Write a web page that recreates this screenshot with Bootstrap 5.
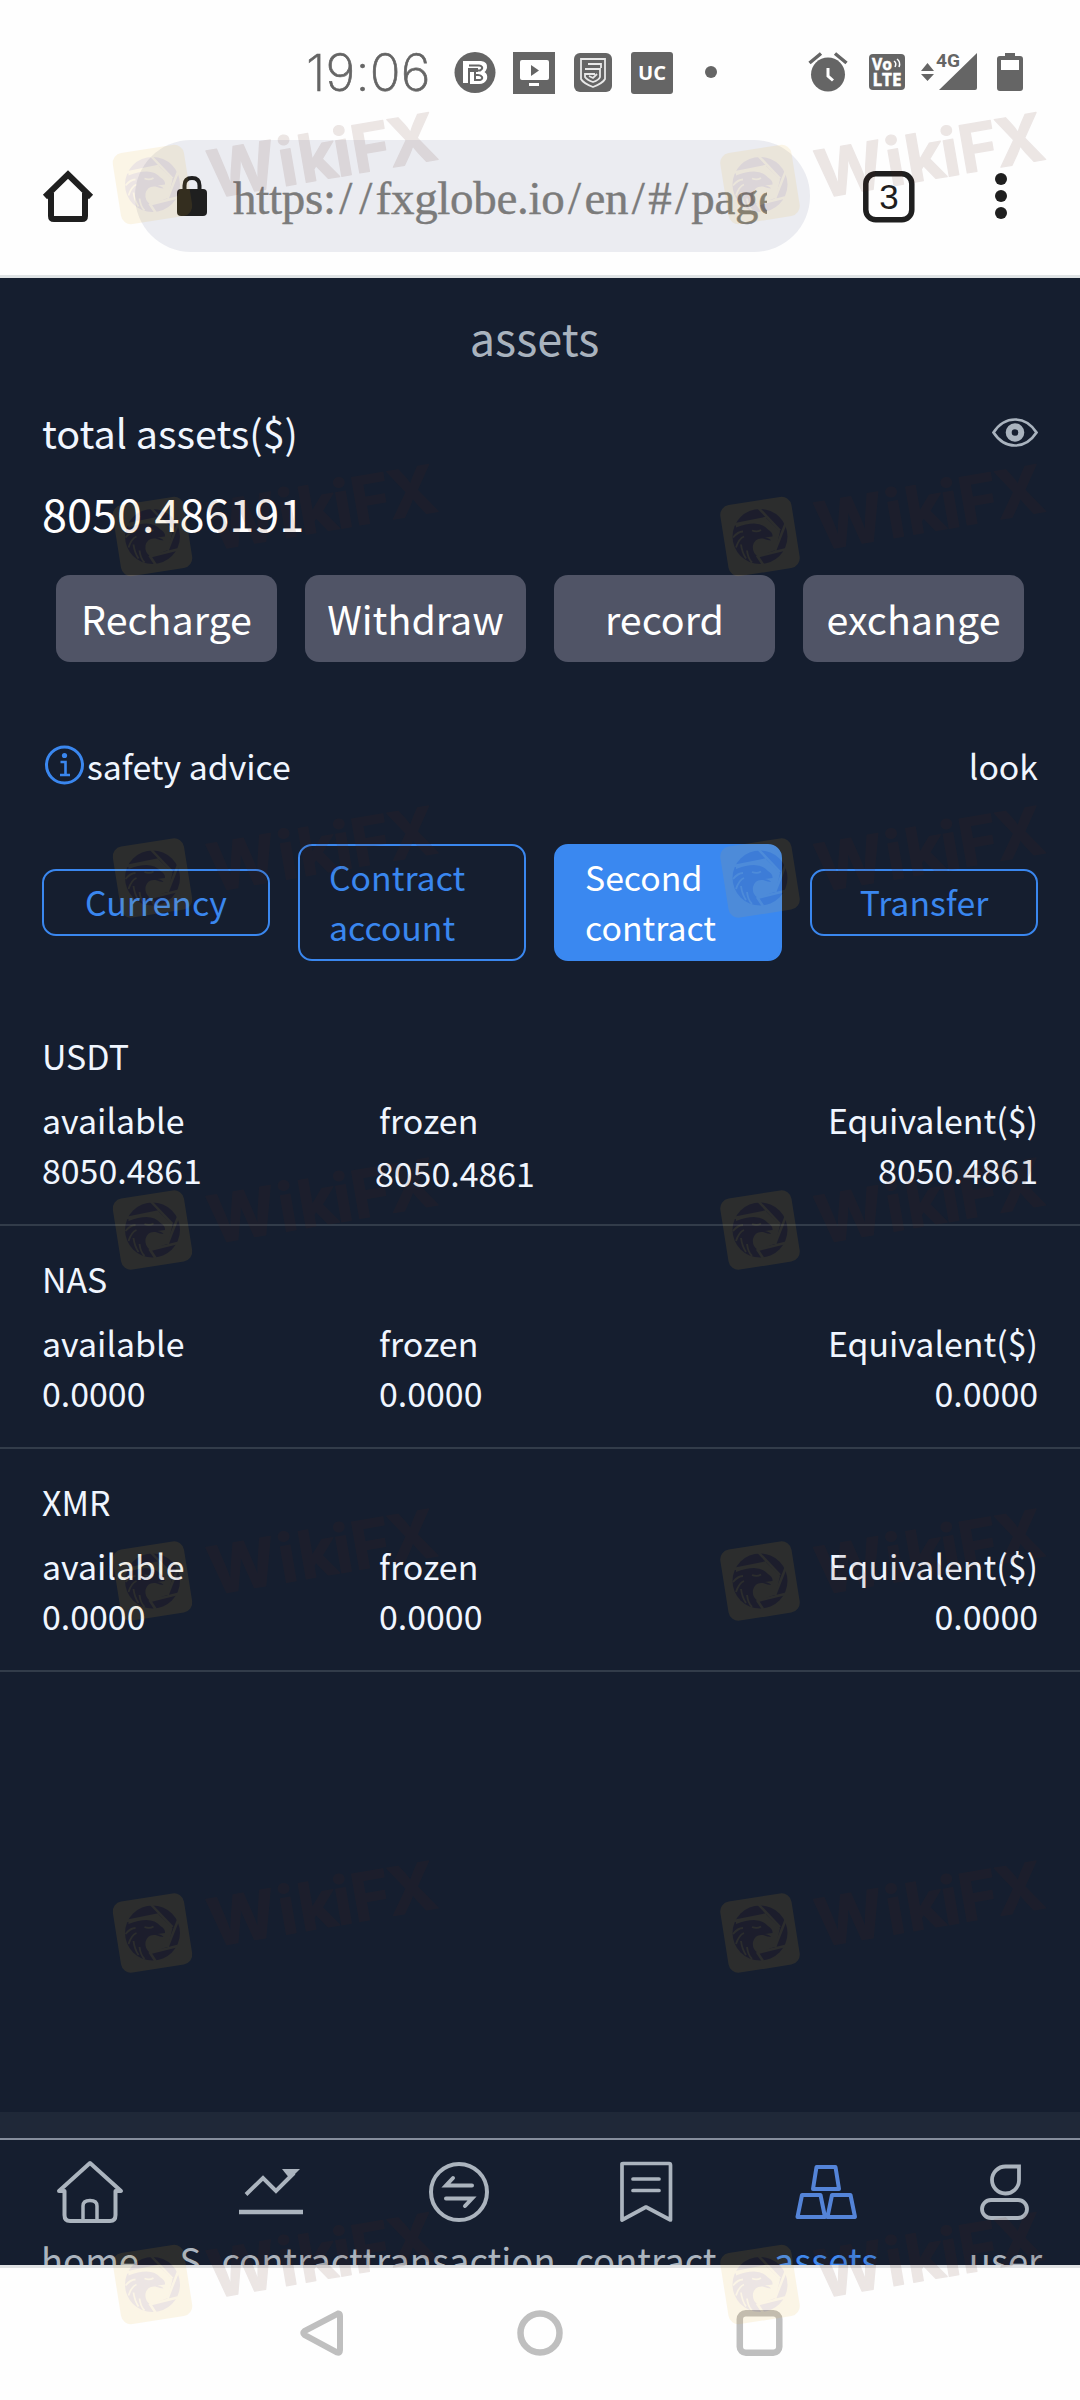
<!DOCTYPE html>
<html lang="en">
<head>
<meta charset="utf-8">
<meta name="viewport" content="width=device-width, initial-scale=1">
<title>assets</title>
<link href="https://cdn.jsdelivr.net/npm/bootstrap@5.3.0/dist/css/bootstrap.min.css" rel="stylesheet">
<style>
  html, body { width: 1080px; height: 2400px; margin: 0; overflow: hidden; }
  body { background: #fefefe; font-family: "Noto Sans CJK SC", "Noto Sans", sans-serif; color: #f0f6ff; }
  svg { display: block; flex: none; overflow: visible; }
  .phone { width: 1080px; height: 2400px; }
  .statusbar { height: 140px; padding: 52px 57px 0 306px; color: #656565; }
  .clock { width: 148px; font: 200 51px/42px "Inter", "Liberation Sans", sans-serif; letter-spacing: .2px; -webkit-text-stroke: .7px #656565; white-space: nowrap; }
  .status-icons { gap: 17px; }
  .alarm-gap { margin-right: 21px; }
  .signal-gap { margin-left: 16px; }
  .battery-gap { margin-left: 16px; }
  .toolbar { height: 138px; padding: 0 42px; color: #1f1f1f; border-bottom: 3px solid #dfe3e5; }
  .toolbar > svg { margin-top: 31px; }
  .tab-count { margin-left: 53px; }
  .more-dots { margin-left: 80px; }
  .urlpill { width: 675px; height: 112px; border-radius: 58px; background: #ebecf1; margin-left: 41px; padding: 0 43px 0 42px; }
  .urltext { font: 47px/60px "Liberation Serif", serif; color: #7b7b7b; margin: 6px 0 0 26px; letter-spacing: -.3px; white-space: nowrap; overflow: hidden; height: 62px; -webkit-text-stroke: .4px #7b7b7b; }
  .urltext i { font-style: normal; margin: 0 3.6px; }
  .app { height: 1987px; background: #151e2f; }
  .title-line { font-size: 45px; line-height: 118px; height: 117px; color: #a9b3be; padding-right: 11px; }
  .side { padding-left: 42px; padding-right: 42px; }
  .total-label { font-size: 39.5px; line-height: 74px; }
  .total-value { font-size: 45px; line-height: 88px; height: 90px; color: #fff; }
  .actions { padding: 16px 56px 0; gap: 28px; }
  .actions .btn { flex: 1 1 0; height: 87px; border: 0; border-radius: 14px; background: #505466; color: #fff; font-size: 39.4px; line-height: 85px; padding: 0 0 2px; }
  .safety { margin-top: 79px; height: 49px; font-size: 33.8px; line-height: 50px; }
  .safety svg { margin-top: -2px; }
  .tabs { margin-top: 54px; height: 117px; gap: 28px; }
  .tabs .btn { flex: none; width: 228px; border: 2px solid #3a87ef; border-radius: 14px; color: #3a87ef; background: transparent; font-size: 33.8px; line-height: 50px; padding: 6px 0 7px; }
  .tabs .btn.two-line { text-align: left; padding-left: 29px; }
  .tabs .btn.active { background: #3a88f0; border-color: #3a88f0; color: #fff; }
  .coins { margin-top: 42px; font-size: 33.9px; line-height: 50px; }
  .coin { height: 223px; padding-top: 28px; border-bottom: 2px solid #323c4a; }
  .coin-figures { margin-top: 14px; }
  .coin-mid { width: 332px; padding-left: 5px; }
  .coin-first { width: 332px; }
  .shifted { margin: 3px 0 0 -4px; }
  .band { height: 28px; background: #1f2838; border-bottom: 2px solid #858d9c; }
  .tabbar { height: 125px; overflow: hidden; color: #abb4be; font-size: 36.4px; line-height: 54px; white-space: nowrap; }
  .tabbar .entry { padding-top: 17px; }
  .entry svg { width: 70px; height: 70px; margin-bottom: 5px; }
  .w180 { width: 180px; } .w183 { width: 182px; } .w193 { width: 194px; } .w164 { width: 163px; }
  .current { color: #3f88ee; }
  .sysnav { height: 135px; border-top: 3px solid #dfe1e3; }
  .sysnav div { gap: 174px; padding: 42px 0 0 300px; }
  .watermarks { position: absolute; left: 0; top: 0; pointer-events: none; }
</style>
</head>
<body>
<div class="phone d-flex flex-column">

  <header class="statusbar d-flex align-items-start">
    <div class="clock">19:06</div>
    <div class="status-icons d-flex">
      <svg width="42" height="42" viewBox="0 0 42 42"><circle cx="21" cy="20.500" r="20.500" fill="#656565"/><path d="M9 9H27Q34 10 33 16Q32 19 30.500 20Q34 22 33 27Q31 32 25 32H16V20H24V16H14V31H9Z" fill="#fff"/><path d="M21 19.500V28H26Q29 27 28 25Q27 23 24 23H21M21 18.500H26Q29 17 28 15Q27 13.500 25 13.500H15" fill="none" stroke="#656565" stroke-width="2"/></svg>
      <svg width="42" height="42" viewBox="0 0 42 42"><path d="M0 0H42V42H0Z" fill="#656565"/><rect x="7" y="8" width="29" height="20" rx="2" fill="#fff"/><path d="M18 13L26 18.500L18 24Z" fill="#656565"/><path d="M16 31H26V34H16Z" fill="#fff"/></svg>
      <svg width="42" height="42" viewBox="0 0 42 42"><rect x="2" y="1" width="38" height="39" rx="6" fill="#656565"/><g fill="none" stroke="#e8e8e8" stroke-width="1.800"><path d="M9 7H33V27Q31 31 21 35Q11 31 9 27Z"/><path d="M16 12H29V16M13 17H28V25Q27 28 21 30Q15 28 13 25V22H23"/><path d="M17 24L21 26L25 22"/></g></svg>
      <svg width="42" height="42" viewBox="0 0 42 42"><rect width="42" height="42" rx="3" fill="#656565"/><text x="21" y="27.500" text-anchor="middle" font-family="Open Sans, sans-serif" font-weight="700" font-size="19" textLength="28" lengthAdjust="spacingAndGlyphs" fill="#fff">UC</text></svg>
      <svg width="46" height="42" viewBox="0 0 46 42"><circle cx="21" cy="20" r="6" fill="#656565"/></svg>
    </div>
    <div class="d-flex ms-auto">
      <svg class="alarm-gap" width="40" height="42" viewBox="0 0 40 42"><circle cx="20" cy="22.500" r="17" fill="#656565"/><path d="M1.500 11L13 1.500M38.500 11L27 1.500" stroke="#656565" stroke-width="3.500"/><path d="M20 16V24L25 28.500" fill="none" stroke="#fff" stroke-width="3"/></svg>
      <svg width="36" height="42" viewBox="0 0 36 42"><rect y="2" width="36" height="36" rx="4" fill="#656565"/><g font-family="Open Sans, sans-serif" font-weight="700" fill="#fff" stroke="#fff" stroke-width=".5"><text x="3" y="18" font-size="16.500" textLength="20" lengthAdjust="spacingAndGlyphs">Vo</text><text x="3.500" y="34" font-size="17" textLength="29" lengthAdjust="spacingAndGlyphs">LTE</text></g><path d="M25 9Q28 11 26 15M28 7Q32 10 30 15" fill="none" stroke="#fff" stroke-width="1.500"/></svg>
      <svg class="signal-gap" width="60" height="42" viewBox="0 0 60 42"><path d="M0 19L6.500 11L13 19ZM0 22H13L6.500 29ZM18 38L56 1V36Q56 38 54 38Z" fill="#656565"/><text x="15" y="15" font-family="Roboto, sans-serif" font-weight="700" font-size="18.500" textLength="24" lengthAdjust="spacingAndGlyphs" fill="#656565">4G</text></svg>
      <svg class="battery-gap" width="26" height="42" viewBox="0 0 26 42"><path d="M8 1H18V4H23Q26 4 26 7V36Q26 39 23 39H3Q0 39 0 36V7Q0 4 3 4H8Z" fill="#656565"/><path d="M4 8H22V18H4Z" fill="#fff"/></svg>
    </div>
  </header>

  <nav class="toolbar d-flex align-items-start">
    <svg width="52" height="52" viewBox="0 0 52 52"><path d="M3 26L26 3.500L49 26M9 22V45Q9 48 12 48H40Q43 48 43 45V22" fill="none" stroke="#1f1f1f" stroke-width="6"/></svg>
    <div class="urlpill d-flex align-items-center">
      <svg width="30" height="40" viewBox="0 0 30 40"><rect y="13" width="30" height="27" rx="4" fill="#1f1f1f"/><path d="M7.500 15V9.500Q7.500 2 15 2Q22.500 2 22.500 9.500V15" fill="none" stroke="#1f1f1f" stroke-width="4"/></svg>
      <div class="urltext flex-grow-1">https:<i>/</i><i>/</i>fxglobe.io<i>/</i>en<i>/</i>#<i>/</i>page</div>
    </div>
    <svg class="tab-count" width="52" height="52" viewBox="0 0 52 52"><rect x="2.800" y="2.800" width="46" height="46" rx="10" fill="none" stroke="#1f1f1f" stroke-width="5.500"/><text x="26" y="38" text-anchor="middle" font-family="Liberation Sans, sans-serif" font-size="35" fill="#1f1f1f">3</text></svg>
    <svg class="more-dots" width="14" height="52" viewBox="0 0 14 52"><g fill="#1f1f1f"><circle cx="6" cy="8" r="6"/><circle cx="6" cy="25" r="6"/><circle cx="6" cy="42" r="6"/></g></svg>
  </nav>

  <main class="app d-flex flex-column">
    <div class="title-line text-center">assets</div>
    <section class="side">
      <div class="d-flex justify-content-between align-items-center total-label">
        <span>total assets($)</span>
        <svg width="46" height="29" viewBox="0 0 46 29"><path d="M1.500 14.500Q10 1.500 23 1.500Q36 1.500 44.500 14.500Q36 27.500 23 27.500Q10 27.500 1.500 14.500Z" fill="none" stroke="#a9b3be" stroke-width="2.700"/><circle cx="23" cy="14.500" r="6.300" fill="none" stroke="#a9b3be" stroke-width="6"/></svg>
      </div>
      <div class="total-value">8050.486191</div>
    </section>
    <div class="actions d-flex">
      <button class="btn" type="button">Recharge</button>
      <button class="btn" type="button">Withdraw</button>
      <button class="btn" type="button">record</button>
      <button class="btn" type="button">exchange</button>
    </div>
    <div class="safety side d-flex justify-content-between">
      <div class="d-flex align-items-center">
        <svg width="45" height="40" viewBox="0 0 45 40"><circle cx="22.500" cy="20" r="18" fill="none" stroke="#3a87ef" stroke-width="3"/><circle cx="22.500" cy="10.500" r="2.600" fill="#3a87ef"/><path d="M18.500 17H23.500V30M18 30H28" fill="none" stroke="#3a87ef" stroke-width="2.600"/></svg>
        <span>safety advice</span>
      </div>
      <span>look</span>
    </div>
    <div class="tabs side d-flex align-items-center">
      <button class="btn" type="button">Currency</button>
      <button class="btn two-line" type="button">Contract<br>account</button>
      <button class="btn two-line active" type="button">Second<br>contract</button>
      <button class="btn" type="button">Transfer</button>
    </div>
    <section class="coins flex-grow-1">
      <article class="coin side">
        <div>USDT</div>
        <div class="coin-figures d-flex">
          <div class="coin-first"><div>available</div><div>8050.4861</div></div>
          <div class="coin-mid"><div>frozen</div><div class="shifted">8050.4861</div></div>
          <div class="ms-auto text-end"><div>Equivalent($)</div><div>8050.4861</div></div>
        </div>
      </article>
      <article class="coin side">
        <div>NAS</div>
        <div class="coin-figures d-flex">
          <div class="coin-first"><div>available</div><div>0.0000</div></div>
          <div class="coin-mid"><div>frozen</div><div>0.0000</div></div>
          <div class="ms-auto text-end"><div>Equivalent($)</div><div>0.0000</div></div>
        </div>
      </article>
      <article class="coin side">
        <div>XMR</div>
        <div class="coin-figures d-flex">
          <div class="coin-first"><div>available</div><div>0.0000</div></div>
          <div class="coin-mid"><div>frozen</div><div>0.0000</div></div>
          <div class="ms-auto text-end"><div>Equivalent($)</div><div>0.0000</div></div>
        </div>
      </article>
    </section>
    <div class="band"></div>
    <nav class="tabbar d-flex">
      <div class="entry w180 d-flex flex-column align-items-center">
        <svg viewBox="0 0 70 70" fill="none" stroke="#abb4be" stroke-width="4" stroke-linejoin="round"><path d="M9.500 34H4L35 6L66 34H60.500V58Q60.500 64 55 64H15Q9.500 64 9.500 58Z"/><path d="M28 64V49Q28 43.500 35 43.500Q42 43.500 42 49V64" stroke-width="3.500"/></svg>
        <span>home</span>
      </div>
      <div class="entry w183 d-flex flex-column align-items-center">
        <svg viewBox="0 0 70 70"><path d="M10 37.500L27 21L40 34L58 16" fill="none" stroke="#abb4be" stroke-width="4"/><path d="M46 12H64L54 22Z" fill="#abb4be"/><path d="M3 55H67" stroke="#abb4be" stroke-width="4.500"/></svg>
        <span>S_contract</span>
      </div>
      <div class="entry w193 d-flex flex-column align-items-center">
        <svg viewBox="0 0 70 70" fill="none" stroke="#abb4be" stroke-width="4" stroke-linecap="round"><circle cx="35" cy="35" r="28"/><path d="M48 28.500H22L29 21M22 41.500H48L41 49"/></svg>
        <span>transaction</span>
      </div>
      <div class="entry w180 d-flex flex-column align-items-center">
        <svg viewBox="0 0 70 70" fill="none" stroke="#abb4be" stroke-width="3.700" stroke-linejoin="round" stroke-linecap="round"><path d="M11 7Q11 6.500 12 6.500H58Q59.500 6.500 59.500 8V63L35 50L11 63Z"/><path d="M22 22H48M22 33.500H48"/></svg>
        <span>contract</span>
      </div>
      <div class="entry w180 d-flex flex-column align-items-center">
        <svg viewBox="0 0 70 70" fill="none" stroke="#5484d8" stroke-width="4" stroke-linejoin="round"><path d="M25.500 10H44.500L48 32H22ZM11 38H29.500L34 60H6.500ZM41 38H59.500L64 60H36.500Z"/></svg>
        <span class="current">assets</span>
      </div>
      <div class="entry w164 d-flex flex-column align-items-center ps-3">
        <svg viewBox="0 0 70 70" fill="none" stroke="#abb4be" stroke-width="3.800"><path d="M48 9.500V23.500A13.500 13.500 0 1 1 34.500 9.500Z"/><rect x="11" y="43" width="45" height="18" rx="9"/></svg>
        <span>user</span>
      </div>
    </nav>
  </main>

  <footer class="sysnav">
    <div class="d-flex">
      <svg width="43" height="46" viewBox="0 0 43 46"><path d="M38 3.500Q40 3 40 6V40Q40 43.500 37 42.500L4.500 25Q2 23 4.500 21Z" fill="none" stroke="#bfbfbf" stroke-width="6"/></svg>
      <svg width="45" height="46" viewBox="0 0 45 46"><circle cx="23" cy="23" r="19.500" fill="none" stroke="#bfbfbf" stroke-width="6.500"/></svg>
      <svg width="46" height="46" viewBox="0 0 46 46"><rect x="3.800" y="3.300" width="39.500" height="39.500" rx="6" fill="none" stroke="#bfbfbf" stroke-width="6.500"/></svg>
    </div>
  </footer>
</div>

<svg class="watermarks" width="1080" height="2400" viewBox="0 0 1080 2400">
  <defs>
    <g id="stamp" opacity=".105">
      <rect x="-36" y="-36" width="72" height="72" rx="10" transform="rotate(-9)" fill="#e8ac24"/>
      <circle r="27.500" fill="#5a1c14"/>
      <g fill="none" stroke="#e8ac24" stroke-width="2.500">
        <path d="M-26 -12L6 -18.500M-2 -29L20 -6M26 -14L15 14M-3 20L25 13M-3 19L3 28"/>
      </g>
      <path d="M-24 -12.500L6 -18.500L20 -5L15.500 13.500L-2 20Q-8 16 -7 9Q-5 1 3 2Q8 4 11 4Q10 2 5 1L12.500 0Q13 -4 8 -7Q3 -13 -6 -13Q-14 -13 -24 -9Z" fill="#e8ac24"/>
      <path d="M-8 -6Q-3 -4 1 -6.500M-13 14Q-12 22 -8 26M-24 11Q-21 2 -16 0M-27 1Q-22 -5 -17 -5M-19 8Q-18 16 -14 22" fill="none" stroke="#e8ac24" stroke-width="1.800"/>
      <text transform="translate(60 14) rotate(-9.800)" x="0 71 91 127 145 182" y="0" font-family="Inter, Liberation Sans, sans-serif" font-weight="700" font-size="66" fill="#5a2418" stroke="#5a2418" stroke-width="1.200" stroke-linejoin="round">WikiFX</text>
    </g>
    <g id="pair"><use href="#stamp" x="152.500"/><use href="#stamp" x="760"/></g>
  </defs>
  <use href="#pair" y="184.500"/><use href="#pair" y="536.500"/><use href="#pair" y="878"/><use href="#pair" y="1230"/><use href="#pair" y="1581"/><use href="#pair" y="1933"/><use href="#pair" y="2284.500"/>
</svg>
<script src="https://cdn.jsdelivr.net/npm/bootstrap@5.3.0/dist/js/bootstrap.bundle.min.js"></script>
</body>
</html>
